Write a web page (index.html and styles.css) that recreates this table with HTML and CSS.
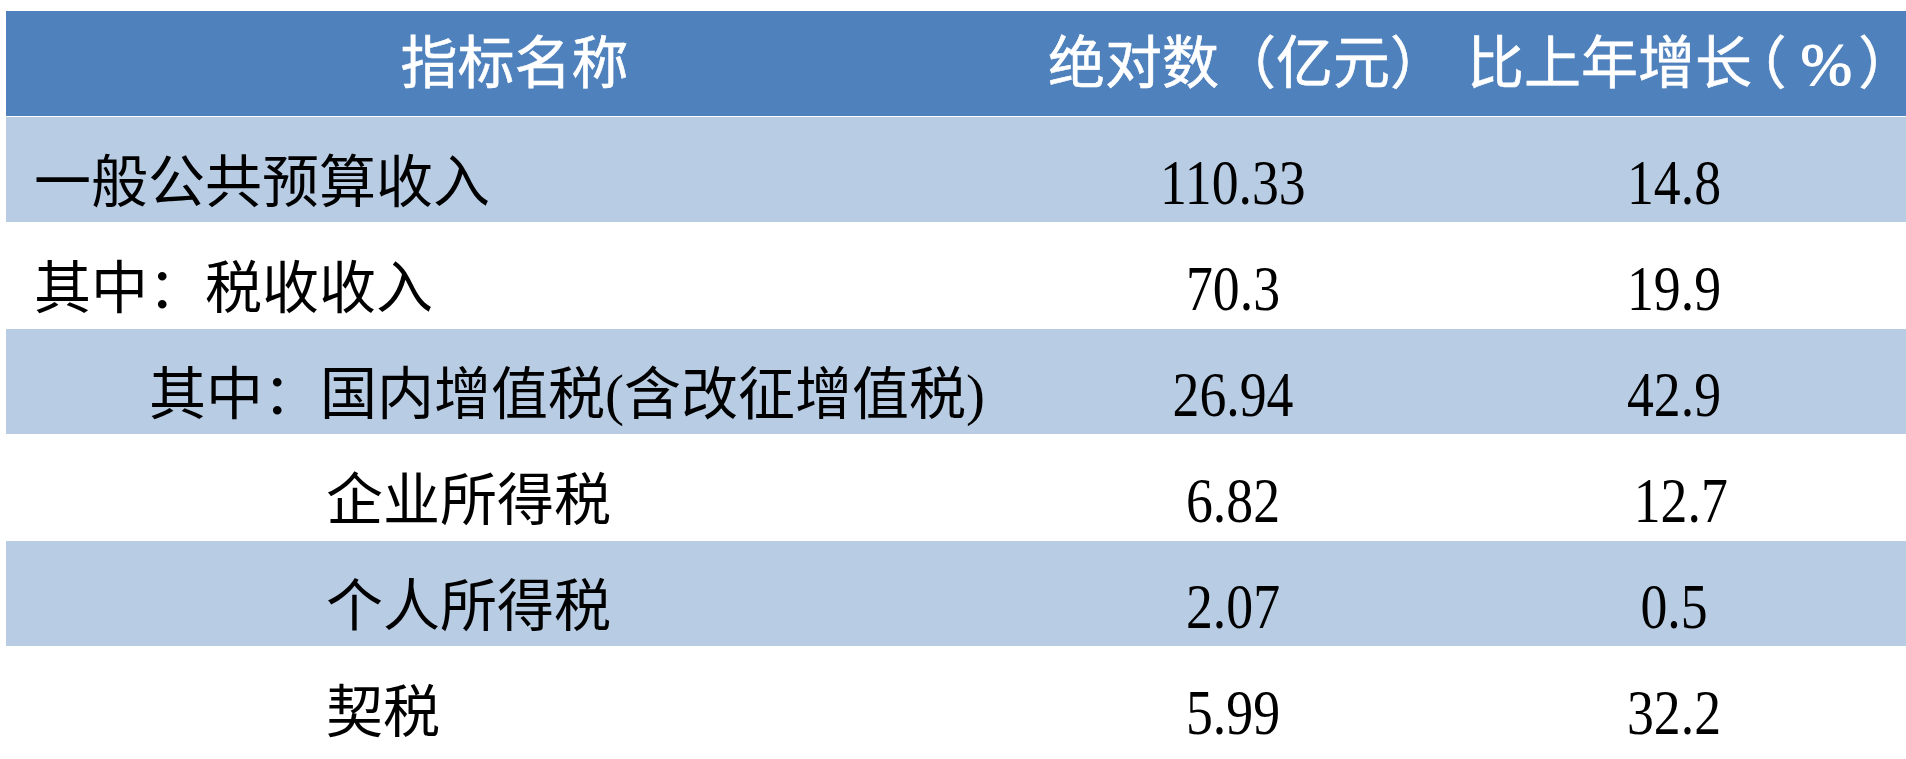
FILE: index.html
```html
<!DOCTYPE html>
<html lang="zh-CN">
<head>
<meta charset="utf-8">
<title>一般公共预算收入</title>
<link rel="stylesheet" href="styles.css">
</head>
<body>
<div class="table">
  <div class="row head">
    <div class="cell c1">指标名称</div>
    <div class="cell c2">绝对数（亿元）</div>
    <div class="cell c3">比上年增长<span class="lp">（</span><span class="pct">%</span><span class="rp">）</span></div>
  </div>
  <div class="row shade">
    <div class="cell c1 ind0">一般公共预算收入</div>
    <div class="cell c2"><span class="num">110.33</span></div>
    <div class="cell c3"><span class="num">14.8</span></div>
  </div>
  <div class="row">
    <div class="cell c1 ind0">其中：税收收入</div>
    <div class="cell c2"><span class="num">70.3</span></div>
    <div class="cell c3"><span class="num">19.9</span></div>
  </div>
  <div class="row shade">
    <div class="cell c1 ind1">其中：国内增值税(含改征增值税)</div>
    <div class="cell c2"><span class="num">26.94</span></div>
    <div class="cell c3"><span class="num">42.9</span></div>
  </div>
  <div class="row">
    <div class="cell c1 ind2">企业所得税</div>
    <div class="cell c2"><span class="num">6.82</span></div>
    <div class="cell c3"><span class="num"> 12.7</span></div>
  </div>
  <div class="row shade">
    <div class="cell c1 ind2">个人所得税</div>
    <div class="cell c2"><span class="num">2.07</span></div>
    <div class="cell c3"><span class="num">0.5</span></div>
  </div>
  <div class="row">
    <div class="cell c1 ind2">契税</div>
    <div class="cell c2"><span class="num">5.99</span></div>
    <div class="cell c3"><span class="num">32.2</span></div>
  </div>
</div>
</body>
</html>
```
FILE: styles.css
```css
html, body {
  margin: 0;
  padding: 0;
  background: #ffffff;
  overflow: hidden;
}
body {
  padding: 11px 0 0 6px;
  font-family: "Liberation Serif", "Noto Sans CJK SC", serif;
  color: #000000;
}
.table {
  width: 1900px;
  display: flex;
  flex-direction: column;
}
.row {
  display: grid;
  grid-template-columns: 1017px 419px 464px;
  height: 106px;
  box-sizing: border-box;
  border-bottom: 1px solid #ffffff;
}
.row.head {
  background: #4f81bd;
  color: #ffffff;
}
.row.shade {
  background: #b8cce4;
}
.cell {
  display: flex;
  align-items: center;
  white-space: nowrap;
  font-size: 57px;
  line-height: 1;
  padding-top: 26px;
  box-sizing: border-box;
}
.head .cell {
  padding-top: 0;
  font-weight: 400;
  -webkit-text-stroke: 0.6px #ffffff;
}
.c1 {
  justify-content: flex-start;
}
.head .c1 {
  justify-content: center;
}
.c2, .c3 {
  justify-content: center;
}
.head .c2 {
  justify-content: flex-start;
  padding-left: 25px;
}
.head .c3 {
  justify-content: flex-start;
  padding-left: 25px;
  font-feature-settings: "halt";
}
.lp {
  margin-left: 6px;
}
.pct {
  font-size: 62px;
  margin: 0 6px 0 14px;
  -webkit-text-stroke: 1.2px #ffffff;
}
.ind0 { padding-left: 28px; }
.ind1 { padding-left: 143px; }
.ind2 { padding-left: 320px; }
.num {
  display: inline-block;
  font-size: 64px;
  white-space: pre;
  transform: scaleX(0.84);
}
```
